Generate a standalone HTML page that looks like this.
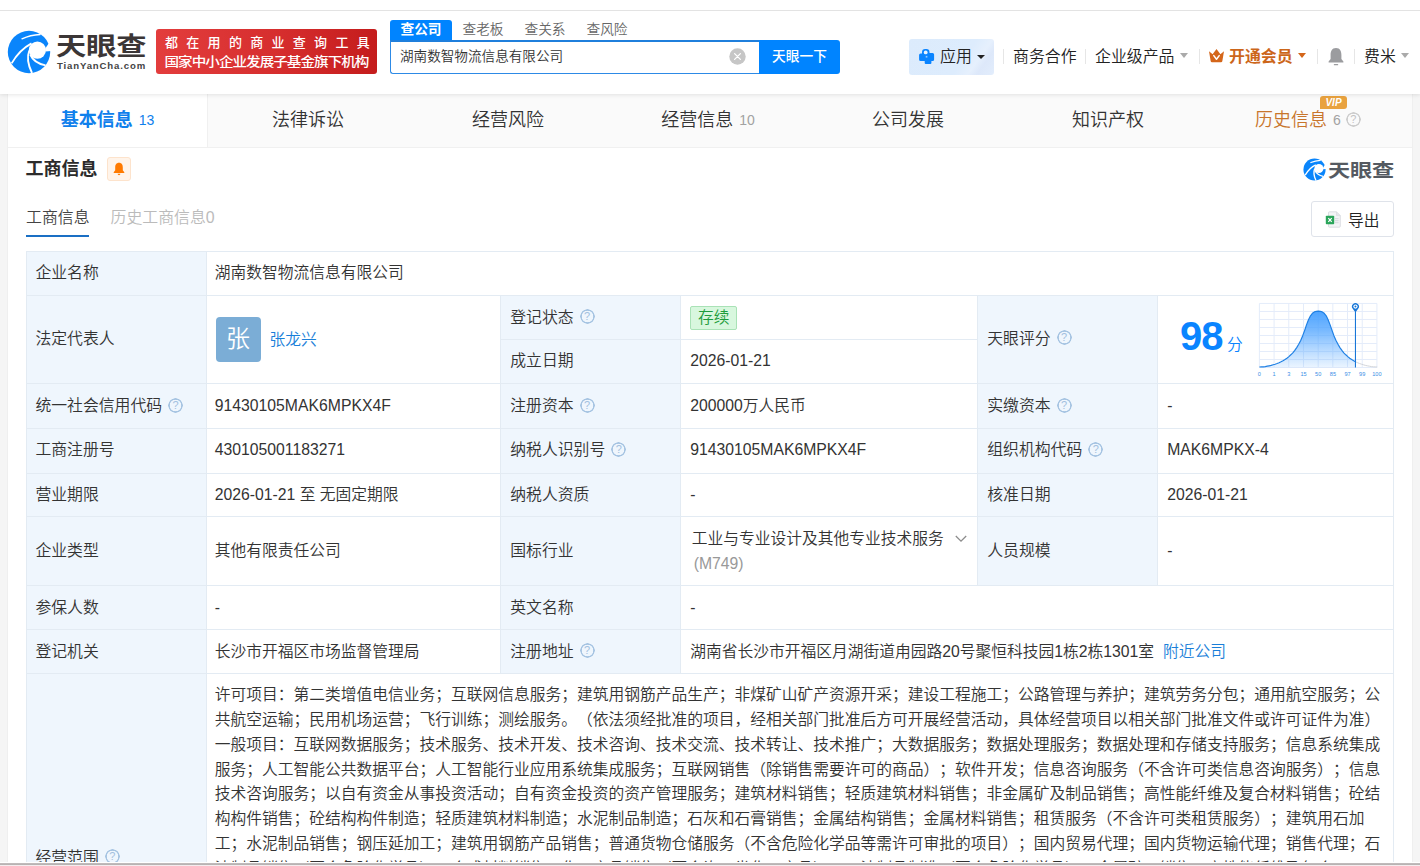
<!DOCTYPE html>
<html lang="zh-CN">
<head>
<meta charset="utf-8">
<title>湖南数智物流信息有限公司 - 天眼查</title>
<style>
*{box-sizing:border-box;margin:0;padding:0}
html,body{width:1420px;height:866px;overflow:hidden;background:#f5f5f5}
body{position:relative;font-family:"Liberation Sans","Noto Sans CJK SC",sans-serif;color:#333;font-size:15.75px;font-weight:350;text-spacing-trim:space-all}
.abs{position:absolute}
a{text-decoration:none;color:inherit}
/* header */
#hdr{position:absolute;left:0;top:0;width:1420px;height:94px;background:#fff;box-shadow:0 1px 4px rgba(0,0,0,.10);z-index:5}
#topline{position:absolute;left:0;top:10px;width:1420px;height:1px;background:#e3e3e3}
.logo-cn{position:absolute;left:56px;top:24px;font-size:30px;line-height:42px;font-weight:700;color:#3b3636;letter-spacing:-.2px;white-space:nowrap;transform:scale(1.01,.83);transform-origin:0 0;margin-top:4.5px}
.logo-en{position:absolute;left:57px;top:60px;font-size:9.6px;line-height:12px;font-weight:700;color:#444;letter-spacing:.85px;white-space:nowrap}
#banner{position:absolute;left:156px;top:29px;width:221px;height:45px;border-radius:3px;background:linear-gradient(90deg,#e33d3d 0%,#d62e2e 55%,#c41c1c 100%);color:#fff;font-weight:700;white-space:nowrap}
#banner .l1{position:absolute;left:9px;top:5.6px;font-size:13px;line-height:16px;letter-spacing:8.3px;font-weight:500}
#banner .l2{position:absolute;left:8.5px;top:23.6px;font-size:14.6px;line-height:18px;letter-spacing:-1px;font-weight:500;transform:scaleY(.86);transform-origin:0 50%}
.stab{position:absolute;top:20px;height:20px;width:62px;text-align:center;font-size:13.7px;line-height:19px;color:#666;white-space:nowrap}
.stab.on{background:#0084ff;color:#fff;font-weight:700;border-radius:3px 3px 0 0}
#sbox{position:absolute;left:390px;top:40px;width:370px;height:34px;border:1px solid #2d8ae6;border-top:2px solid #1f7fdc;border-right:0;border-radius:0 0 0 3px;background:#fff}
#sbox span{position:absolute;left:9px;top:5px;font-size:13.6px;line-height:20px;color:#333;white-space:nowrap}
#sbtn{position:absolute;left:759px;top:40px;width:81px;height:34px;background:#0084ff;border-radius:0 3px 3px 0;color:#fff;font-size:13.7px;line-height:33px;text-align:center;font-weight:500;white-space:nowrap}
#clr{position:absolute;left:729px;top:48px;width:17px;height:17px}
.nav{position:absolute;top:45.2px;font-size:15.9px;line-height:24px;color:#222;white-space:nowrap}
.sep{position:absolute;top:49px;width:1px;height:15px;background:#e6e6e6}
.caret{position:absolute;top:53px;width:0;height:0;border-left:4px solid transparent;border-right:4px solid transparent;border-top:5px solid #aaa}
#app{position:absolute;left:909px;top:39px;width:85px;height:36px;border-radius:3px;background:linear-gradient(125deg,#dcebfc 0%,#ddecfd 62%,#e6f0fd 76%,#dde8fa 84%,#e2edfc 100%)}

/* page */
#page{position:absolute;left:8px;top:94px;width:1404px;height:900px;background:#fff;box-shadow:0 0 0 1px #efefef}
#tabs{position:absolute;left:0;top:0;width:1404px;height:54px;background:#fafafa;border-bottom:1px solid #f0f0f0}
.tab{position:absolute;top:0;width:200px;height:53px;text-align:center;white-space:nowrap;line-height:52px;color:#333}
.tab.on{background:#fff;color:#0f80ec;border-right:1px solid #f0f0f0;height:53px}
.tab .t{font-size:18px}
.tab.on .t{font-weight:700}
.tab .n{font-size:14px;color:#a2a2a2;margin-left:6px;position:relative;top:-1px}
.tab.on .n{color:#0f80ec}
.tab.vip .t{color:#c8752c}
.vipb{position:absolute;left:112px;top:2px;width:27px;height:12.5px;background:#e9a23f;border-radius:3px 3px 3px 0;color:#fff;font-size:10px;line-height:13px;font-weight:700;font-style:italic;text-align:center}
.h1{position:absolute;left:17.5px;top:62.2px;font-size:18px;line-height:26px;font-weight:700;color:#2b2b2b;white-space:nowrap}
.bellbox{position:absolute;left:99px;top:63px;width:24px;height:24px;border:1px solid #fde3cc;background:#fff4ea;border-radius:3px}
.bellbox svg{position:absolute;left:4px;top:4px}
.sub{position:absolute;top:112.2px;font-size:15.9px;line-height:24px;white-space:nowrap}
.sub.on{left:18px;color:#444}
.sub.off{left:102.5px;color:#bbb}
.subline{position:absolute;left:18px;top:141px;width:63px;height:2px;background:#1a6fc4}
.wm{position:absolute;left:1320px;top:61px;font-size:22px;line-height:28px;font-weight:700;color:#555a61;letter-spacing:-.2px;white-space:nowrap;transform:scale(1.01,.83);transform-origin:0 0;margin-top:4.7px}
.export{position:absolute;left:1303px;top:107px;width:83px;height:36px;border:1px solid #dfe3ea;border-radius:3px;background:#fff;white-space:nowrap}
.export svg{position:absolute;left:13px;top:9px}
.export span{position:absolute;left:36px;top:6.5px;font-size:15.75px;line-height:24px;color:#222}
/* table */
#tbl{position:absolute;left:18px;top:157px;width:1368px;height:792px;border-right:1px solid #e3ebf3;border-bottom:1px solid #e3ebf3}
.c{position:absolute;border-left:1px solid #e3ebf3;border-top:1px solid #e3ebf3;display:flex;align-items:center;padding:.4px 9px 0 8.4px;white-space:nowrap;font-size:15.75px;line-height:24px}
.c.u{padding-bottom:2px}
.c.l{background:#eff6fd;color:#333;font-size:15.85px}
.c.v{background:#fff;color:#333}
.q{display:inline-block;width:15px;height:15px;border-radius:50%;background:radial-gradient(circle at 50% 50%,rgba(0,0,0,0) 5.55px,#a6c4e2 6.05px,#a6c4e2 7.0px,rgba(166,196,226,0) 7.5px);color:#a3c1df;font-size:11px;font-weight:400;line-height:15px;position:relative;top:-1px;text-align:center;margin-left:6px;font-family:"Liberation Sans",sans-serif;flex:none}
.q.s13{background:radial-gradient(circle at 50% 50%,rgba(0,0,0,0) 5.55px,#cdcdcd 6.05px,#cdcdcd 7.0px,rgba(205,205,205,0) 7.5px);color:#c2c2c2;margin-left:5px;vertical-align:middle;top:-2px}
.av{display:inline-block;margin-left:.8px;width:45px;height:45px;border-radius:4px;background:#7badd6;color:#fff;font-size:24px;line-height:43px;text-align:center}
.lk{color:#1a7fd9}
.tag{display:inline-block;height:24px;line-height:22px;padding:0 6.8px;position:relative;top:.5px;border:1px solid #a9e2b6;background:#d8f7de;color:#1e9c3c;border-radius:2px}
.ind{line-height:25px;white-space:nowrap;margin-left:1.5px;position:relative;top:-.5px}
.g{color:#999;margin-left:2px}
.chev{position:absolute;left:274px;top:17.5px}
.scope{align-items:flex-start;padding-top:9.3px}
.scope p{line-height:24.8px;white-space:nowrap}
#botw{position:absolute;left:0;top:862px;width:1420px;height:1px;background:#fff;z-index:9}
#botg{position:absolute;left:0;top:863px;width:1420px;height:2px;background:linear-gradient(#c2bebe,#b5b0b0);z-index:9}
#botp{position:absolute;left:0;top:865px;width:1420px;height:1px;background:#f5ecee;z-index:9}

.sc{position:absolute;left:22px;top:14px;font-size:40px;line-height:52px;font-weight:700;color:#0a84ff;font-family:"Liberation Sans",sans-serif;letter-spacing:-1px}
.fen{position:absolute;left:69px;top:38px;font-size:15.75px;line-height:22px;color:#0a84ff}
.chart{position:absolute;left:94px;top:0}
</style>
</head>
<body>
<div id="hdr">
  <div id="topline"></div>
  <svg class="abs" style="left:7px;top:30px" width="44" height="44" viewBox="0 0 44 44">
    <circle cx="22" cy="22" r="21.2" fill="#0a85fb"/>
    <circle cx="30.4" cy="20.1" r="8.6" fill="#fff"/>
    <path d="M41.6 13.6 L38.3 18.6 L38.5 21.6 L44 20.9 L44 13.6 Z" fill="#fff"/>
    <path d="M15 8.8 Q23.5 5 33 4.5" stroke="#fff" stroke-width="1.4" fill="none" stroke-linecap="round"/>
    <path d="M4.6 33.4 Q12.3 20 24.5 13.4" stroke="#fff" stroke-width="1.8" fill="none"/>
    <path d="M25 43 Q18.6 30 22.3 20.5" stroke="#fff" stroke-width="1.9" fill="none"/>
    <path d="M23.2 24.5 Q27 33 38.5 35.4" stroke="#fff" stroke-width="1.9" fill="none"/>
  </svg>
  <div class="logo-cn">天眼查</div>
  <div class="logo-en">TianYanCha.com</div>
  <div id="banner"><div class="l1">都在用的商业查询工具</div><div class="l2">国家中小企业发展子基金旗下机构</div></div>

  <div class="stab on" style="left:390px">查公司</div>
  <div class="stab" style="left:452px">查老板</div>
  <div class="stab" style="left:514px">查关系</div>
  <div class="stab" style="left:576px">查风险</div>
  <div id="sbox"><span>湖南数智物流信息有限公司</span></div>
  <svg id="clr" viewBox="0 0 17 17"><circle cx="8.5" cy="8.5" r="8.2" fill="#c6c6c6"/><path d="M5.6 5.6 L11.4 11.4 M11.4 5.6 L5.6 11.4" stroke="#fff" stroke-width="1.3" stroke-linecap="round"/></svg>
  <div id="sbtn">天眼一下</div>

  <div id="app"></div>
  <svg class="abs" style="left:919px;top:49px" width="16" height="16" viewBox="0 0 16 16">
    <path d="M3 4.6 V3.2 A3.2 3.2 0 0 1 6.2 0 H7.4 A3.2 3.2 0 0 1 10.5 3.2 V4 H13.6 A1.5 1.5 0 0 1 15.1 5.5 V10.4 A1.5 1.5 0 0 1 13.6 11.9 H12.4 V14 A1.1 1.1 0 0 1 11.3 15.1 H6.8 A1.1 1.1 0 0 1 5.7 14 V11.9 H1.6 A1.5 1.5 0 0 1 .1 10.4 V6.1 A1.5 1.5 0 0 1 1.6 4.6 Z" fill="#0a84ff"/>
    <circle cx="6.7" cy="3.4" r="1.9" fill="#e8f3ff"/>
    <rect x="6.7" y="6.9" width="1.7" height="1.7" fill="#8cc4ff"/>
  </svg>
  <div class="nav" style="left:940px">应用</div>
  <div class="caret" style="left:977px;top:55px;border-top-width:4.5px;border-top-color:#222"></div>
  <div class="sep" style="left:1003px"></div>
  <div class="nav" style="left:1013px">商务合作</div>
  <div class="sep" style="left:1085px"></div>
  <div class="nav" style="left:1095px">企业级产品</div>
  <div class="caret" style="left:1180px"></div>
  <div class="sep" style="left:1199px"></div>
  <svg class="abs" style="left:1208px;top:48px" width="17" height="15" viewBox="0 0 17 15">
    <path d="M1 3.2 L4.6 6.2 L8.5 1 L12.4 6.2 L16 3.2 L14.3 13.2 Q14.1 14.2 13 14.2 H4 Q2.9 14.2 2.7 13.2 Z" fill="#d4661a"/>
    <path d="M5.8 7.6 L8.5 11.2 L11.2 7.6" stroke="#fff" stroke-width="1.5" fill="none" stroke-linecap="round" stroke-linejoin="round"/>
  </svg>
  <div class="nav" style="left:1229px;font-weight:700;color:#cc661a">开通会员</div>
  <div class="caret" style="left:1298px;border-top-color:#d4661a"></div>
  <div class="sep" style="left:1317px"></div>
  <svg class="abs" style="left:1327px;top:47px" width="18" height="20" viewBox="0 0 18 20">
    <path d="M9 1 C4.8 1 3.6 4.6 3.6 8 V12 L1.6 14.6 V15.6 H16.4 V14.6 L14.4 12 V8 C14.4 4.6 13.2 1 9 1 Z" fill="#9b9c9f"/>
    <rect x="6.8" y="17" width="4.4" height="1.3" rx=".6" fill="#9b9c9f"/>
  </svg>
  <div class="sep" style="left:1354px"></div>
  <div class="nav" style="left:1364px">费米</div>
  <div class="caret" style="left:1401px"></div>
</div>
<div id="page">
  <div id="tabs">
    <div class="tab on" style="left:0;width:200px"><span class="t">基本信息</span><span class="n">13</span></div>
    <div class="tab" style="left:200px"><span class="t">法律诉讼</span></div>
    <div class="tab" style="left:400px"><span class="t">经营风险</span></div>
    <div class="tab" style="left:600px"><span class="t">经营信息</span><span class="n">10</span></div>
    <div class="tab" style="left:800px"><span class="t">公司发展</span></div>
    <div class="tab" style="left:1000px"><span class="t">知识产权</span></div>
    <div class="tab vip" style="left:1200px"><span class="t">历史信息</span><span class="n">6</span><span class="q s13">?</span><i class="vipb">VIP</i></div>
  </div>
  <div class="h1">工商信息</div>
  <div class="bellbox"><svg width="14" height="14" viewBox="0 0 14 14"><path d="M7 .8 C4.2 .8 3.2 3 3.2 5.4 V8.2 L1.7 10.3 V11 H12.3 V10.3 L10.8 8.2 V5.4 C10.8 3 9.8 .8 7 .8 Z" fill="#ff7a00"/><path d="M5.6 11.8 H8.4 Q8.2 13.2 7 13.2 Q5.8 13.2 5.6 11.8 Z" fill="#ff7a00"/></svg></div>
  <div class="sub on">工商信息</div>
  <div class="subline"></div>
  <div class="sub off">历史工商信息0</div>
  <svg class="abs" style="left:1295px;top:64px" width="23" height="23" viewBox="0 0 44 44">
    <circle cx="22" cy="22" r="21.2" fill="#0a85fb"/>
    <circle cx="30.4" cy="20.1" r="8.6" fill="#fff"/>
    <path d="M41.6 13.6 L38.3 18.6 L38.5 21.6 L44 20.9 L44 13.6 Z" fill="#fff"/>
    <path d="M15 8.8 Q23.5 5 33 4.5" stroke="#fff" stroke-width="2.2" fill="none" stroke-linecap="round"/>
    <path d="M4.2 32.8 Q12 19 24.5 13.2" stroke="#fff" stroke-width="2.6" fill="none"/>
    <path d="M24.8 43 Q18.5 30 22.3 20.5" stroke="#fff" stroke-width="2.6" fill="none"/>
    <path d="M23.2 24.5 Q27 33 38.5 35" stroke="#fff" stroke-width="2.6" fill="none"/>
  </svg>
  <div class="wm">天眼查</div>
  <div class="export"><svg width="17" height="17" viewBox="0 0 17 17"><path d="M4.5 .8 H11.5 L15.3 4.6 V15.2 Q15.3 16.2 14.3 16.2 H4.5 Q3.5 16.2 3.5 15.2 V1.8 Q3.5 .8 4.5 .8 Z" fill="#f3f4f6" stroke="#d4d7dc" stroke-width=".8"/><path d="M11.5 .8 V4.6 H15.3" fill="#e3e5e9" stroke="#d4d7dc" stroke-width=".6"/><rect x="10" y="7.2" width="3.6" height="1" fill="#d4d7dc"/><rect x="10" y="9.2" width="3.6" height="1" fill="#d4d7dc"/><rect x="10" y="11.2" width="3.6" height="1" fill="#d4d7dc"/><rect x=".8" y="4.8" width="8.4" height="8.4" rx=".8" fill="#2aa55a"/><path d="M3.3 7.1 L6.7 10.9 M6.7 7.1 L3.3 10.9" stroke="#fff" stroke-width="1.2"/></svg><span>导出</span></div>

  <div id="tbl">
    <!-- row 1 -->
    <div class="c l u" style="left:0;top:0;width:180px;height:44px">企业名称</div>
    <div class="c v u" style="left:180px;padding-left:7.8px;top:0;width:1187px;height:44px">湖南数智物流信息有限公司</div>
    <!-- row 2 -->
    <div class="c l u" style="left:0;top:44px;width:180px;height:88px">法定代表人</div>
    <div class="c v" style="left:180px;padding-left:7.8px;top:44px;width:294px;height:88px"><span class="av">张</span><span class="lk" style="margin-left:9px">张龙兴</span></div>
    <div class="c l" style="left:474px;padding-left:9.2px;top:44px;width:180px;height:44px">登记状态<span class="q">?</span></div>
    <div class="c v" style="left:654px;padding-left:9.2px;top:44px;width:297px;height:44px"><span class="tag">存续</span></div>
    <div class="c l u" style="left:474px;padding-left:9.2px;top:88px;width:180px;height:44px">成立日期</div>
    <div class="c v u" style="left:654px;padding-left:9.2px;top:88px;width:297px;height:44px">2026-01-21</div>
    <div class="c l u" style="left:951px;padding-left:9.2px;top:44px;width:180px;height:88px">天眼评分<span class="q">?</span></div>
    <div class="c v" style="left:1131px;padding-left:9.2px;top:44px;width:236px;height:88px"><span class="sc">98</span><span class="fen">分</span>
<svg class="chart" width="132" height="86" viewBox="0 0 132 86">
<defs><linearGradient id="gf" x1="0" y1="0" x2="0" y2="1"><stop offset="0" stop-color="#3d9bff" stop-opacity=".92"/><stop offset=".35" stop-color="#4da3ff" stop-opacity=".75"/><stop offset="1" stop-color="#5aaaff" stop-opacity=".12"/></linearGradient></defs>
<path d="M7.40 7.45H124.92M7.40 15.46H124.92M7.40 23.46H124.92M7.40 31.47H124.92M7.40 39.47H124.92M7.40 47.48H124.92M7.40 55.49H124.92M7.40 63.49H124.92M7.40 71.50H124.92M7.40 7.45V71.50M22.09 7.45V71.50M36.78 7.45V71.50M51.47 7.45V71.50M66.16 7.45V71.50M80.85 7.45V71.50M95.54 7.45V71.50M110.23 7.45V71.50M124.92 7.45V71.50" stroke="#e4ecfa" stroke-width="1" fill="none"/>
<path d="M7.4 71.0 L9.4 70.9 L11.4 70.8 L13.3 70.6 L15.3 70.2 L17.2 69.8 L19.2 69.4 L21.2 68.8 L23.1 68.2 L25.1 67.5 L27.1 66.7 L29.0 65.8 L31.0 64.7 L33.0 63.5 L34.9 62.2 L36.9 60.6 L38.8 58.8 L40.8 56.8 L42.8 54.4 L44.7 51.6 L46.7 48.3 L48.7 44.4 L50.6 39.9 L52.6 34.6 L54.5 28.9 L56.5 23.7 L58.5 19.8 L60.4 17.3 L62.4 15.9 L64.4 15.3 L66.3 15.1 L68.3 15.3 L70.2 15.9 L72.2 17.3 L74.2 19.8 L76.1 23.7 L78.1 28.9 L80.1 34.6 L82.0 39.9 L84.0 44.4 L86.0 48.3 L87.9 51.6 L89.9 54.4 L91.8 56.8 L93.8 58.8 L95.8 60.6 L97.7 62.2 L99.7 63.5 L101.7 64.7 L103.5 65.7 L103.5 71.5 L7.4 71.5 Z" fill="url(#gf)"/>
<path d="M103.5 65.7 L103.6 65.8 L105.6 66.7 L107.5 67.5 L109.5 68.2 L111.5 68.8 L113.4 69.4 L115.4 69.8 L117.4 70.2 L119.3 70.6 L121.3 70.8 L123.2 70.9 L125.2 71.0" stroke="#d2d5da" stroke-width="1" fill="none"/>
<path d="M7.4 71.0 L9.4 70.9 L11.4 70.8 L13.3 70.6 L15.3 70.2 L17.2 69.8 L19.2 69.4 L21.2 68.8 L23.1 68.2 L25.1 67.5 L27.1 66.7 L29.0 65.8 L31.0 64.7 L33.0 63.5 L34.9 62.2 L36.9 60.6 L38.8 58.8 L40.8 56.8 L42.8 54.4 L44.7 51.6 L46.7 48.3 L48.7 44.4 L50.6 39.9 L52.6 34.6 L54.5 28.9 L56.5 23.7 L58.5 19.8 L60.4 17.3 L62.4 15.9 L64.4 15.3 L66.3 15.1 L68.3 15.3 L70.2 15.9 L72.2 17.3 L74.2 19.8 L76.1 23.7 L78.1 28.9 L80.1 34.6 L82.0 39.9 L84.0 44.4 L86.0 48.3 L87.9 51.6 L89.9 54.4 L91.8 56.8 L93.8 58.8 L95.8 60.6 L97.7 62.2 L99.7 63.5 L101.7 64.7 L103.5 65.7" stroke="#1f80e4" stroke-width="1.2" fill="none" stroke-linejoin="round"/>
<path d="M103.46 16V71.5" stroke="#1877d8" stroke-width="1.1"/>
<path d="M103.46 16.6 L100.6 12.6 A3.5 3.5 0 1 1 106.3 12.6 Z" fill="#1877d8"/>
<circle cx="103.46" cy="10.6" r="2.1" fill="#fff"/><circle cx="103.46" cy="10.6" r="1" fill="#1877d8"/>
<g font-family="Liberation Sans, sans-serif" font-size="5.6" fill="#3a8ee6"><text x="7.4" y="79.6" text-anchor="middle">0</text><text x="22.1" y="79.6" text-anchor="middle">1</text><text x="36.8" y="79.6" text-anchor="middle">3</text><text x="51.5" y="79.6" text-anchor="middle">15</text><text x="66.2" y="79.6" text-anchor="middle">50</text><text x="80.9" y="79.6" text-anchor="middle">85</text><text x="95.5" y="79.6" text-anchor="middle">97</text><text x="110.2" y="79.6" text-anchor="middle">99</text><text x="124.9" y="79.6" text-anchor="middle">100</text></g>
</svg></div>
    <!-- row 3 -->
    <div class="c l" style="left:0;top:132px;width:180px;height:45px">统一社会信用代码<span class="q">?</span></div>
    <div class="c v" style="left:180px;padding-left:7.8px;top:132px;width:294px;height:45px">91430105MAK6MPKX4F</div>
    <div class="c l" style="left:474px;padding-left:9.2px;top:132px;width:180px;height:45px">注册资本<span class="q">?</span></div>
    <div class="c v" style="left:654px;padding-left:9.2px;top:132px;width:297px;height:45px">200000万人民币</div>
    <div class="c l" style="left:951px;padding-left:9.2px;top:132px;width:180px;height:45px">实缴资本<span class="q">?</span></div>
    <div class="c v" style="left:1131px;padding-left:9.2px;top:132px;width:236px;height:45px">-</div>
    <!-- row 4 -->
    <div class="c l u" style="left:0;top:177px;width:180px;height:45px">工商注册号</div>
    <div class="c v u" style="left:180px;padding-left:7.8px;top:177px;width:294px;height:45px">430105001183271</div>
    <div class="c l u" style="left:474px;padding-left:9.2px;top:177px;width:180px;height:45px">纳税人识别号<span class="q">?</span></div>
    <div class="c v u" style="left:654px;padding-left:9.2px;top:177px;width:297px;height:45px">91430105MAK6MPKX4F</div>
    <div class="c l u" style="left:951px;padding-left:9.2px;top:177px;width:180px;height:45px">组织机构代码<span class="q">?</span></div>
    <div class="c v u" style="left:1131px;padding-left:9.2px;top:177px;width:236px;height:45px">MAK6MPKX-4</div>
    <!-- row 5 -->
    <div class="c l" style="left:0;top:222px;width:180px;height:43px">营业期限</div>
    <div class="c v" style="left:180px;padding-left:7.8px;top:222px;width:294px;height:43px">2026-01-21 至 无固定期限</div>
    <div class="c l" style="left:474px;padding-left:9.2px;top:222px;width:180px;height:43px">纳税人资质</div>
    <div class="c v" style="left:654px;padding-left:9.2px;top:222px;width:297px;height:43px">-</div>
    <div class="c l" style="left:951px;padding-left:9.2px;top:222px;width:180px;height:43px">核准日期</div>
    <div class="c v" style="left:1131px;padding-left:9.2px;top:222px;width:236px;height:43px">2026-01-21</div>
    <!-- row 6 -->
    <div class="c l" style="left:0;top:265px;width:180px;height:69px">企业类型</div>
    <div class="c v" style="left:180px;padding-left:7.8px;top:265px;width:294px;height:69px">其他有限责任公司</div>
    <div class="c l" style="left:474px;padding-left:9.2px;top:265px;width:180px;height:69px">国标行业</div>
    <div class="c v" style="left:654px;padding-left:9.2px;top:265px;width:297px;height:69px"><div class="ind">工业与专业设计及其他专业技术服务<br><span class="g">(M749)</span></div><svg class="chev" width="12" height="8" viewBox="0 0 12 8"><path d="M.8 1 L6 6.2 L11.2 1" stroke="#8c8c8c" stroke-width="1.3" fill="none"/></svg></div>
    <div class="c l" style="left:951px;padding-left:9.2px;top:265px;width:180px;height:69px">人员规模</div>
    <div class="c v" style="left:1131px;padding-left:9.2px;top:265px;width:236px;height:69px">-</div>
    <!-- row 7 -->
    <div class="c l" style="left:0;top:334px;width:180px;height:44px">参保人数</div>
    <div class="c v" style="left:180px;padding-left:7.8px;top:334px;width:294px;height:44px">-</div>
    <div class="c l" style="left:474px;padding-left:9.2px;top:334px;width:180px;height:44px">英文名称</div>
    <div class="c v" style="left:654px;padding-left:9.2px;top:334px;width:713px;height:44px">-</div>
    <!-- row 8 -->
    <div class="c l" style="left:0;top:378px;width:180px;height:44px">登记机关</div>
    <div class="c v" style="left:180px;padding-left:7.8px;top:378px;width:294px;height:44px">长沙市开福区市场监督管理局</div>
    <div class="c l" style="left:474px;padding-left:9.2px;top:378px;width:180px;height:44px">注册地址<span class="q">?</span></div>
    <div class="c v" style="left:654px;padding-left:9.2px;top:378px;width:713px;height:44px">湖南省长沙市开福区月湖街道甪园路20号聚恒科技园1栋2栋1301室<span class="lk" style="margin-left:9px">附近公司</span></div>
    <!-- row 9 -->
    <div class="c l" style="left:0;top:422px;width:180px;height:369px">经营范围<span class="q" style="top:-2px">?</span></div>
    <div class="c v scope" style="left:180px;padding-left:7.8px;top:422px;width:1187px;height:369px"><p>许可项目：第二类增值电信业务；互联网信息服务；建筑用钢筋产品生产；非煤矿山矿产资源开采；建设工程施工；公路管理与养护；建筑劳务分包；通用航空服务；公<br>共航空运输；民用机场运营；飞行训练；测绘服务。（依法须经批准的项目，经相关部门批准后方可开展经营活动，具体经营项目以相关部门批准文件或许可证件为准）<br>一般项目：互联网数据服务；技术服务、技术开发、技术咨询、技术交流、技术转让、技术推广；大数据服务；数据处理服务；数据处理和存储支持服务；信息系统集成<br>服务；人工智能公共数据平台；人工智能行业应用系统集成服务；互联网销售（除销售需要许可的商品）；软件开发；信息咨询服务（不含许可类信息咨询服务）；信息<br>技术咨询服务；以自有资金从事投资活动；自有资金投资的资产管理服务；建筑材料销售；轻质建筑材料销售；非金属矿及制品销售；高性能纤维及复合材料销售；砼结<br>构构件销售；砼结构构件制造；轻质建筑材料制造；水泥制品制造；石灰和石膏销售；金属结构销售；金属材料销售；租赁服务（不含许可类租赁服务）；建筑用石加<br>工；水泥制品销售；钢压延加工；建筑用钢筋产品销售；普通货物仓储服务（不含危险化学品等需许可审批的项目）；国内贸易代理；国内货物运输代理；销售代理；石<br>油制品销售（不含危险化学品）；合成材料销售；化工产品销售（不含许可类化工产品）；石油制品制造（不含危险化学品）；金属矿石销售；高性能纤维及复合</p></div>
  </div>
</div>
<div id="botw"></div><div id="botg"></div><div id="botp"></div>

</body>
</html>
